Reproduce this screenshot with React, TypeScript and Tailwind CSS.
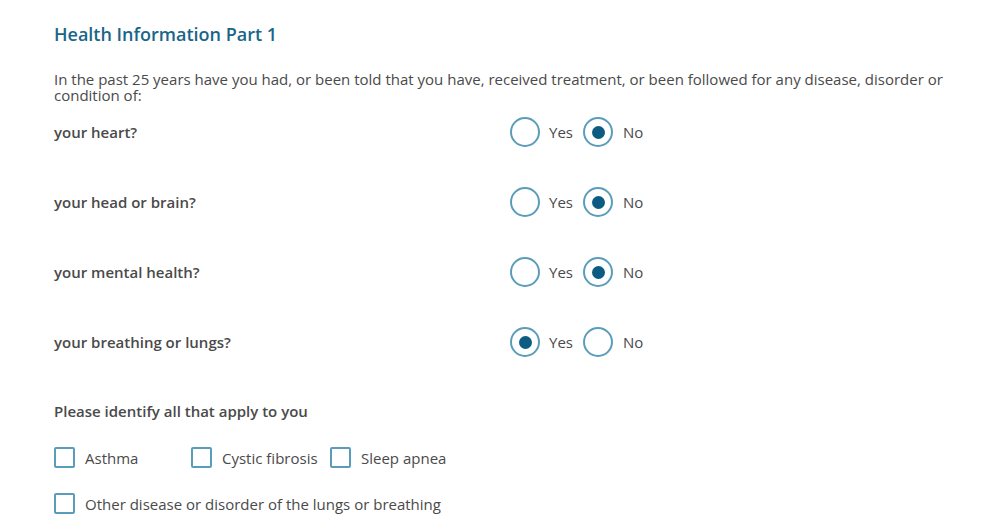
import React from "react";

const questions = [
  { label: "your heart?", value: "no" },
  { label: "your head or brain?", value: "no" },
  { label: "your mental health?", value: "no" },
  { label: "your breathing or lungs?", value: "yes" },
];

function Radio({ checked }: { checked: boolean }) {
  return (
    <span className="flex h-[30px] w-[30px] shrink-0 items-center justify-center rounded-full border-2 border-[#5a9dbb] bg-white">
      {checked && <span className="h-[13px] w-[13px] rounded-full bg-[#0b5b82]" />}
    </span>
  );
}

function Checkbox() {
  return <span className="block h-[21px] w-[21px] shrink-0 rounded-[2px] border-2 border-[#5a9dbb] bg-white" />;
}

export default function App() {
  return (
    <div
      className="min-h-[530px] w-[1000px] bg-white pl-[54px] pt-[22px] text-[15px] text-[#4a4a4a]"
      style={{ fontFamily: "'Open Sans', Lato, sans-serif" }}
    >
      <h1 className="text-[18px] font-semibold leading-[24px] text-[#1a6688]">Health Information Part 1</h1>
      <p className="mt-[25px] w-[912px] leading-[16px]">
        In the past 25 years have you had, or been told that you have, received treatment, or been followed for any disease, disorder or condition of:
      </p>
      <div className="mt-[14px] flex flex-col gap-[40px]">
        {questions.map((q) => (
          <div key={q.label} className="flex h-[30px] items-center">
            <div className="w-[456px] font-semibold leading-[20px]">{q.label}</div>
            <div className="flex items-center">
              <Radio checked={q.value === "yes"} />
              <span className="ml-[9px] w-[34px] leading-[20px]">Yes</span>
              <Radio checked={q.value === "no"} />
              <span className="ml-[10px] leading-[20px]">No</span>
            </div>
          </div>
        ))}
      </div>
      <div className="mt-[44px] font-semibold leading-[20px]">Please identify all that apply to you</div>
      <div className="mt-[26px] flex h-[21px] items-center leading-[20px]">
        <Checkbox />
        <span className="ml-[10px] w-[106px]">Asthma</span>
        <Checkbox />
        <span className="ml-[10px] w-[108px]">Cystic fibrosis</span>
        <Checkbox />
        <span className="ml-[10px]">Sleep apnea</span>
      </div>
      <div className="mt-[25px] flex h-[21px] items-center leading-[20px]">
        <Checkbox />
        <span className="ml-[10px]">Other disease or disorder of the lungs or breathing</span>
      </div>
    </div>
  );
}
